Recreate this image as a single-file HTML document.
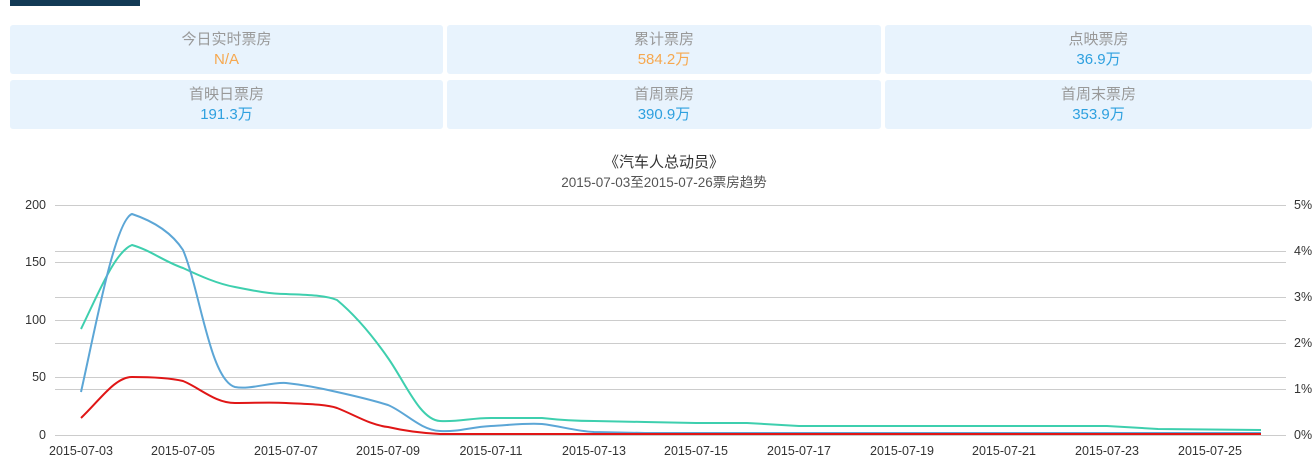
<!DOCTYPE html><html><head><meta charset="utf-8"><style>
body{margin:0;width:1312px;height:464px;background:#fff;font-family:"Liberation Sans","Noto Sans CJK SC",sans-serif;position:relative;overflow:hidden}
.c{position:absolute;background:#e8f3fd;border-radius:3px;text-align:center;height:49px}
.c .t{color:#999;font-size:15px;margin-top:5px;line-height:19px}
.c .v{font-size:15px;line-height:21px;color:#2ea0df}
.o{color:#f6a84f!important}
</style></head><body>
<div style="position:absolute;left:10px;top:0;width:130px;height:6px;background:#123a55"></div>
<div class="c" style="left:10px;top:25px;width:433px"><div class="t">今日实时票房</div><div class="v o">N/A</div></div>
<div class="c" style="left:447px;top:25px;width:434px"><div class="t">累计票房</div><div class="v o">584.2万</div></div>
<div class="c" style="left:885px;top:25px;width:427px"><div class="t">点映票房</div><div class="v">36.9万</div></div>
<div class="c" style="left:10px;top:80px;width:433px"><div class="t">首映日票房</div><div class="v">191.3万</div></div>
<div class="c" style="left:447px;top:80px;width:434px"><div class="t">首周票房</div><div class="v">390.9万</div></div>
<div class="c" style="left:885px;top:80px;width:427px"><div class="t">首周末票房</div><div class="v">353.9万</div></div>
<svg width="1312" height="464" style="position:absolute;left:0;top:0" font-family="Liberation Sans,Noto Sans CJK SC,sans-serif">
<text x="664" y="167" text-anchor="middle" font-size="15" fill="#333">《汽车人总动员》</text>
<text x="664" y="187" text-anchor="middle" font-size="13.5" fill="#555">2015-07-03至2015-07-26票房趋势</text>
<g stroke="#ccc" stroke-width="1">
<line x1="55" x2="1286" y1="205.5" y2="205.5"/><line x1="55" x2="1286" y1="251.5" y2="251.5"/><line x1="55" x2="1286" y1="262.5" y2="262.5"/><line x1="55" x2="1286" y1="297.5" y2="297.5"/><line x1="55" x2="1286" y1="320.5" y2="320.5"/><line x1="55" x2="1286" y1="343.5" y2="343.5"/><line x1="55" x2="1286" y1="377.5" y2="377.5"/><line x1="55" x2="1286" y1="389.5" y2="389.5"/><line x1="55" x2="1286" y1="435.5" y2="435.5"/>
</g>
<g font-size="12.5" fill="#333" text-anchor="end">
<text x="46" y="209">200</text><text x="46" y="266">150</text><text x="46" y="324">100</text><text x="46" y="381">50</text><text x="46" y="439">0</text></g>
<g font-size="12.5" fill="#333">
<text x="1294" y="209">5%</text><text x="1294" y="255">4%</text><text x="1294" y="301">3%</text><text x="1294" y="347">2%</text><text x="1294" y="393">1%</text><text x="1294" y="439">0%</text></g>
<g font-size="12.5" fill="#333" text-anchor="middle">
<text x="81" y="455">2015-07-03</text><text x="183" y="455">2015-07-05</text><text x="286" y="455">2015-07-07</text><text x="388" y="455">2015-07-09</text><text x="491" y="455">2015-07-11</text><text x="594" y="455">2015-07-13</text><text x="696" y="455">2015-07-15</text><text x="799" y="455">2015-07-17</text><text x="902" y="455">2015-07-19</text><text x="1004" y="455">2015-07-21</text><text x="1107" y="455">2015-07-23</text><text x="1210" y="455">2015-07-25</text></g>
<g fill="none" stroke-width="2" stroke-linejoin="round">
<polyline stroke="#b9a8d6" points="594,433 1261,433"/>
<path stroke="#3ecfae" d="M81,329 C100,290 115,252 132,245 C150,250 165,262 183,268 C200,276 218,284 235,287 C255,291 270,294 286,294 C305,295 325,295 337,300 C355,315 372,335 388,358 C405,382 420,420 440,421 C460,422 470,418 491,418 C510,418 525,418 542,418 C560,420 575,421 594,421 L645,422 L696,423 L747,423 L799,426 L1107,426 L1158,429 L1261,430"/>
<path stroke="#5ca6d6" d="M81,392 C95,330 115,220 132,214 C150,220 170,230 183,250 C200,290 210,380 235,387 C250,390 270,382 286,383 C305,385 320,388 337,392 C355,396 372,400 388,405 C405,412 420,430 440,431 C460,432 470,427 491,426 C510,425 525,423 542,424 C560,426 575,431 594,432 L645,433 L1261,433"/>
<path stroke="#e01616" d="M81,418 C100,400 115,377 132,377 C150,377 170,378 183,381 C200,388 215,403 235,403 C255,403 270,402 286,403 C305,404 325,404 337,408 C355,415 370,425 388,427 C405,431 420,433 440,434 L1261,434"/>
</g>
</svg>
</body></html>
